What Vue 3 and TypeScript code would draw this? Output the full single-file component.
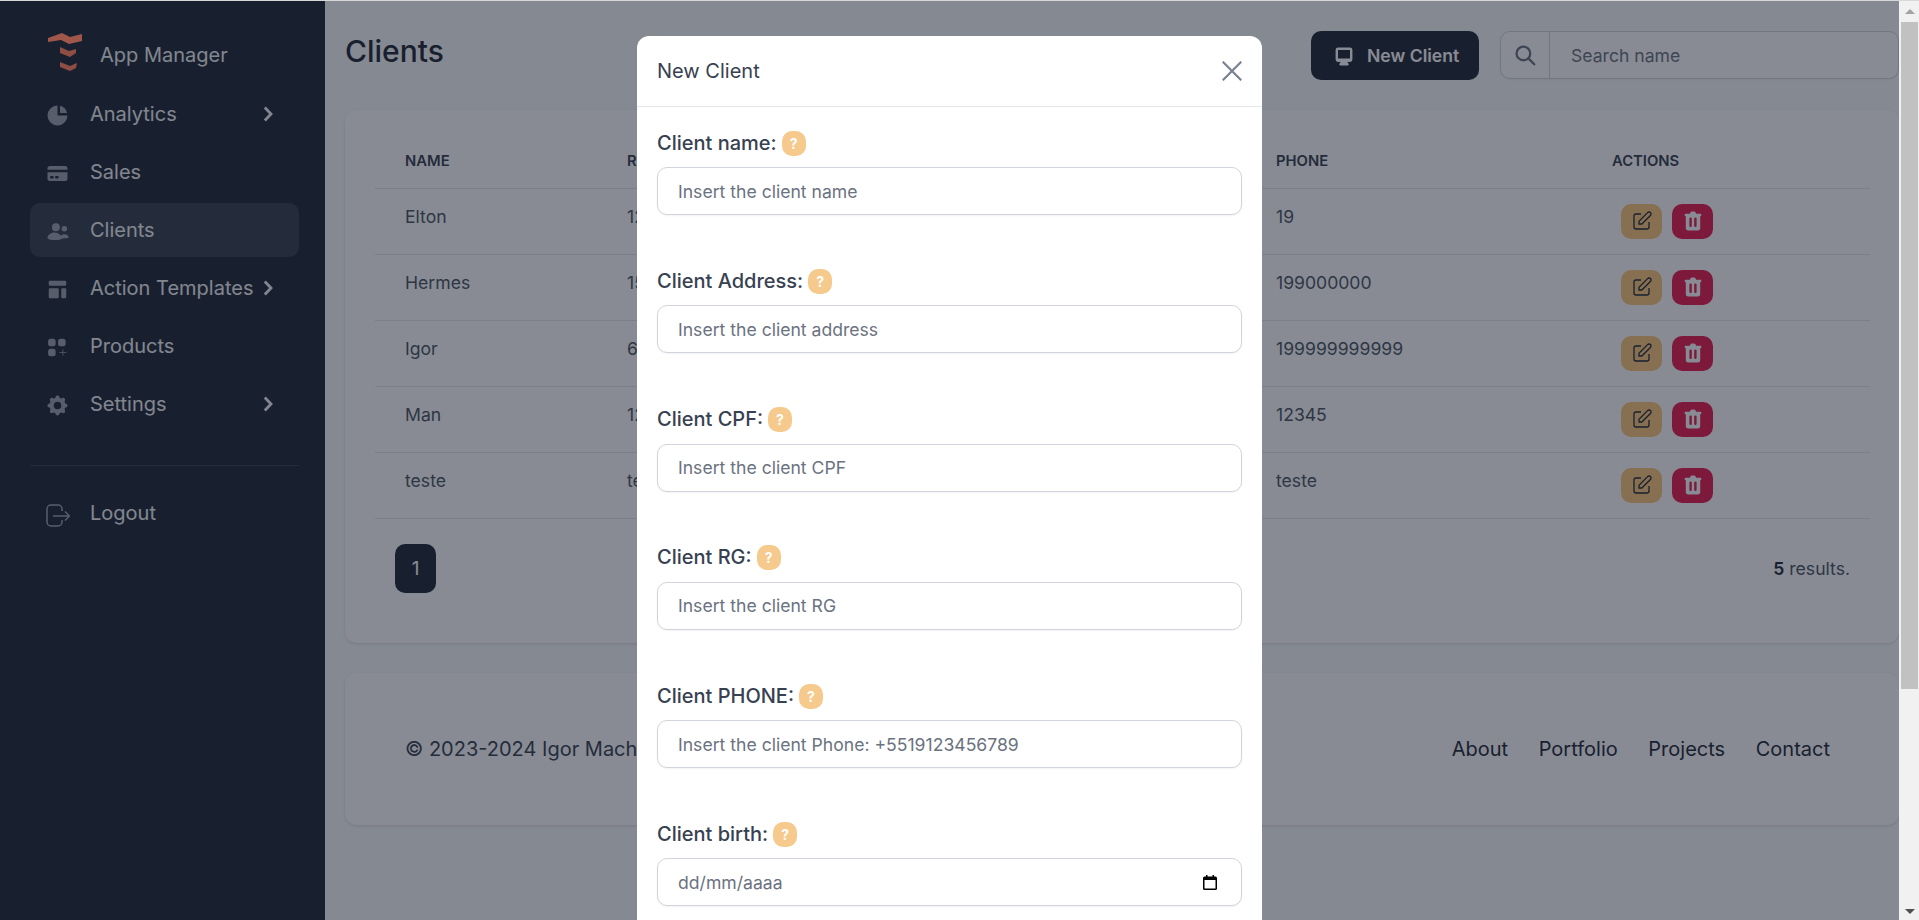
<template>
  <div class="app">
    <div class="page">
      <aside class="sidebar">
        <div class="brand">
          <svg class="logo" viewBox="0 0 36 40" width="36" height="40">
            <path d="M1 6 15 1l8 4 12-3v7l-13 3-8-4L1 10z" fill="#a0574a" />
            <path d="M13 15l9 4 7-2v4l-6 4-10-4z" fill="#8f4e43" />
            <path d="M13 30l10 4 7-3-1 5-6 3-10-4z" fill="#8f4e43" />
          </svg>
          <span>App Manager</span>
        </div>
        <nav class="menu">
          <a v-for="item in menu" :key="item.label" class="menu-item" :class="{ active: item.label === 'Clients' }">
            <svg class="menu-icon" viewBox="0 0 20 20" fill="currentColor">
              <path v-for="d in item.paths" :key="d" :d="d" fill-rule="evenodd" clip-rule="evenodd" />
              <path v-if="item.label === 'Products'" d="M11.5 14h5.5M14.25 11.5v5" stroke="currentColor" stroke-width=".6" />
            </svg>
            <span class="menu-label">{{ item.label }}</span>
            <svg v-if="item.arrow" class="chevron" viewBox="0 0 10 16" fill="none">
              <path d="M1.8 1.5 8 8l-6.2 6.5" stroke="currentColor" stroke-width="2.8" />
            </svg>
          </a>
        </nav>
        <div class="menu-sep"></div>
        <a class="menu-item">
          <svg class="menu-icon" viewBox="0 0 25 25" fill="none" stroke="currentColor" stroke-width="1.5">
            <path d="M17 9V7a4 4 0 0 0-4-4H6A4 4 0 0 0 2 7v13a4 4 0 0 0 4 4h7a4 4 0 0 0 4-4v-2" />
            <path d="M8 14h16M20 9.500 24.500 14 20 18.500" />
          </svg>
          <span class="menu-label">Logout</span>
        </a>
      </aside>

      <main class="content">
        <header class="topbar">
          <h1>Clients</h1>
          <div class="tools">
            <button class="new-btn">
              <svg viewBox="0 0 20 20" width="24" height="24" fill="currentColor">
                <path fill-rule="evenodd" clip-rule="evenodd" d="M3 5a2 2 0 012-2h10a2 2 0 012 2v8a2 2 0 01-2 2h-2.220l.123.489.804.804A1 1 0 0113 18H7a1 1 0 01-.707-1.707l.804-.804L7.220 15H5a2 2 0 01-2-2V5zm5.771 7H5V5h10v7H8.771z" />
              </svg>
              New Client
            </button>
            <div class="search">
              <span class="search-addon">
                <svg viewBox="0 0 20 20" width="21" height="21" fill="none" stroke="currentColor" stroke-width="2.200">
                  <circle cx="8" cy="8" r="6.500" />
                  <path d="M13 13l6 6" />
                </svg>
              </span>
              <input type="text" placeholder="Search name" />
            </div>
          </div>
        </header>

        <section class="card table-card">
          <table>
            <thead>
              <tr>
                <th v-for="col in columns" :key="col">{{ col }}</th>
              </tr>
            </thead>
            <tbody>
              <tr v-for="c in clients" :key="c.name">
                <td>{{ c.name }}</td>
                <td>{{ c.rg }}</td>
                <td>{{ c.cpf }}</td>
                <td>{{ c.address }}</td>
                <td>{{ c.phone }}</td>
                <td class="actions">
                  <button class="act edit">
                    <svg viewBox="0 0 24 24" width="24" height="24" fill="none" stroke="currentColor" stroke-width="1.300">
                      <path d="M11 5H6a2 2 0 00-2 2v11a2 2 0 002 2h11a2 2 0 002-2v-5m-1.414-9.414a2 2 0 112.828 2.828L11.828 15H9v-2.828l8.586-8.586z" />
                    </svg>
                  </button>
                  <button class="act del">
                    <svg viewBox="0 0 20 20" width="24" height="24" fill="currentColor">
                      <path fill-rule="evenodd" clip-rule="evenodd" d="M9 2a1 1 0 00-.894.553L7.382 4H4a1 1 0 000 2v10a2 2 0 002 2h8a2 2 0 002-2V6a1 1 0 100-2h-3.382l-.724-1.447A1 1 0 0011 2H9zM7 8a1 1 0 012 0v6a1 1 0 11-2 0V8zm5-1a1 1 0 00-1 1v6a1 1 0 102 0V8a1 1 0 00-1-1z" />
                    </svg>
                  </button>
                </td>
              </tr>
            </tbody>
          </table>
          <div class="pager">
            <button class="page-btn">1</button>
            <span class="results"><b>5</b> results.</span>
          </div>
        </section>

        <footer class="card footer">
          <span>© 2023-2024 Igor Machado. All Rights Reserved.</span>
          <div class="links">
            <a v-for="l in links" :key="l">{{ l }}</a>
          </div>
        </footer>
      </main>

      <div class="overlay">
        <div class="modal">
          <div class="modal-head">
            <h2>New Client</h2>
            <svg viewBox="0 0 20 20" width="20" height="20" fill="none" stroke="currentColor" stroke-width="2.200">
              <path d="M.7.7l18.600 18.600M19.300.7.7 19.300" />
            </svg>
          </div>
          <div class="modal-body">
            <div v-for="f in fields" :key="f.label" class="field">
              <label>{{ f.label }}<span class="hint">?</span></label>
              <div class="input-wrap">
                <input type="text" :placeholder="f.placeholder" />
                <svg v-if="f.date" class="calendar" viewBox="0 0 14 15" width="14" height="15">
                  <path d="M3 0h1.500v1.500h5V0H11v1.500h1.500A1.500 1.500 0 0 1 14 3v10.500a1.500 1.500 0 0 1-1.500 1.500h-11A1.500 1.500 0 0 1 0 13.500V3a1.500 1.500 0 0 1 1.500-1.500H3zM1.500 5v8.500h11V5z" fill-rule="evenodd" />
                </svg>
              </div>
            </div>
          </div>
        </div>
      </div>
    </div>

    <div class="scrollbar">
      <span class="arrow up"></span>
      <div class="thumb"></div>
      <span class="arrow down"></span>
    </div>
  </div>
</template>

<script setup lang="ts">
interface MenuItem {
  label: string
  paths: string[]
  arrow?: boolean
}

const menu: MenuItem[] = [
  {
    label: 'Analytics',
    arrow: true,
    paths: ['M2 10a8 8 0 018-8v8h8a8 8 0 11-16 0z', 'M12 2.252A8.014 8.014 0 0117.748 8H12V2.252z']
  },
  {
    label: 'Sales',
    paths: [
      'M4 4a2 2 0 00-2 2v1h16V6a2 2 0 00-2-2H4z',
      'M18 9H2v5a2 2 0 002 2h12a2 2 0 002-2V9zM4 13a1 1 0 011-1h1a1 1 0 110 2H5a1 1 0 01-1-1zm5-1a1 1 0 100 2h1a1 1 0 100-2H9z'
    ]
  },
  {
    label: 'Clients',
    paths: [
      'M5.500 6.500a3.200 3.200 0 1 1 6.400 0 3.200 3.200 0 0 1-6.400 0zM13.300 7.800a2.200 2.200 0 1 1 4.400 0 2.200 2.200 0 0 1-4.400 0z',
      'M2 15.500c0-2.800 2.700-4.700 5.500-4.700 2.200 0 4 .9 5 2.500.9-.8 2-1.200 3.200-1.200 1.500 0 3 .8 3.300 2.700-.9.500-2.800.7-5.300.7-.9.900-3 1.300-5.500 1.300-3.500 0-5.700-.6-5.700-1.300z'
    ]
  },
  {
    label: 'Action Templates',
    arrow: true,
    paths: [
      'M3 4a1 1 0 011-1h12a1 1 0 011 1v2a1 1 0 01-1 1H4a1 1 0 01-1-1V4zM3 10a1 1 0 011-1h6a1 1 0 011 1v6a1 1 0 01-1 1H4a1 1 0 01-1-1v-6zM14 9a1 1 0 00-1 1v6a1 1 0 001 1h2a1 1 0 001-1v-6a1 1 0 00-1-1h-2z'
    ]
  },
  {
    label: 'Products',
    paths: [
      'M4.500 3a2 2 0 00-2 2v2a2 2 0 002 2h2a2 2 0 002-2V5a2 2 0 00-2-2h-2zM4.500 11a2 2 0 00-2 2v2a2 2 0 002 2h2a2 2 0 002-2v-2a2 2 0 00-2-2h-2zM10.500 5a2 2 0 012-2h2a2 2 0 012 2v2a2 2 0 01-2 2h-2a2 2 0 01-2-2V5z'
    ]
  },
  {
    label: 'Settings',
    arrow: true,
    paths: [
      'M11.490 3.170c-.38-1.560-2.600-1.560-2.980 0a1.532 1.532 0 01-2.286.948c-1.372-.836-2.942.734-2.106 2.106.54.886.061 2.042-.947 2.287-1.561.379-1.561 2.600 0 2.978a1.532 1.532 0 01.947 2.287c-.836 1.372.734 2.942 2.106 2.106a1.532 1.532 0 012.287.947c.379 1.561 2.600 1.561 2.978 0a1.533 1.533 0 012.287-.947c1.372.836 2.942-.734 2.106-2.106a1.533 1.533 0 01.947-2.287c1.561-.379 1.561-2.600 0-2.978a1.532 1.532 0 01-.947-2.287c.836-1.372-.734-2.942-2.106-2.106a1.532 1.532 0 01-2.287-.947zM10 13a3 3 0 100-6 3 3 0 000 6z'
    ]
  }
]

const columns = ['Name', 'RG', 'CPF', 'Address', 'Phone', 'Actions']

const clients = [
  { name: 'Elton', rg: '123456789', cpf: '12345678900', address: 'Rua A', phone: '19' },
  { name: 'Hermes', rg: '159753', cpf: '15975300000', address: 'Rua B', phone: '199000000' },
  { name: 'Igor', rg: '654321', cpf: '65432100000', address: 'Rua C', phone: '199999999999' },
  { name: 'Man', rg: '123456', cpf: '12345600000', address: 'Rua D', phone: '12345' },
  { name: 'teste', rg: 'teste', cpf: 'teste', address: 'teste', phone: 'teste' }
]

const links = ['About', 'Portfolio', 'Projects', 'Contact']

const fields = [
  { label: 'Client name:', placeholder: 'Insert the client name' },
  { label: 'Client Address:', placeholder: 'Insert the client address' },
  { label: 'Client CPF:', placeholder: 'Insert the client CPF' },
  { label: 'Client RG:', placeholder: 'Insert the client RG' },
  { label: 'Client PHONE:', placeholder: 'Insert the client Phone: +5519123456789' },
  { label: 'Client birth:', placeholder: 'dd/mm/aaaa', date: true }
]
</script>

<style>
html,
body {
  margin: 0;
  overflow: hidden;
}
</style>

<style scoped>
.app {
  display: flex;
  height: 919px;
  border-top: 1px solid #d8d8d8;
  overflow: hidden;
  font-family: Inter, "Noto Sans", sans-serif;
  background: #f1f1f1;
}

.page {
  position: relative;
  display: flex;
  flex: 1;
  min-width: 0;
  background: #f9fafb;
  overflow: hidden;
}

.sidebar {
  box-sizing: border-box;
  flex: 0 0 325px;
  padding: 31px 26px 0 30px;
  background: #1f2937;
  color: #f3f4f6;
}

.brand {
  display: flex;
  align-items: center;
  height: 40px;
  padding-left: 17px;
  font-size: 20px;
  gap: 17px;
}

.brand span {
  margin-top: 6px;
}

.logo {
  position: relative;
  z-index: 1;
}

.menu {
  display: flex;
  flex-direction: column;
  gap: 4px;
  margin-top: 15px;
}

.menu-item {
  display: flex;
  align-items: center;
  height: 54px;
  padding: 0 26px 0 15px;
  border-radius: 10px;
  font-size: 20px;
}

.menu-item.active {
  background: #374151;
}

.menu-icon {
  flex: none;
  width: 25px;
  height: 25px;
  margin: 3px 20px 0 0;
  color: #9ca3af;
}

.menu-label {
  flex: 1;
}

.chevron {
  width: 10px;
  height: 16px;
  color: #f3f4f6;
}

.menu-sep {
  height: 1px;
  margin: 34px 0 20px;
  background: #374151;
}

.content {
  flex: 1;
  min-width: 0;
  padding: 30px 0 0 20px;
}

.topbar {
  display: flex;
  align-items: flex-start;
  justify-content: space-between;
  height: 49px;
}

h1 {
  margin: 0;
  font-size: 30px;
  font-weight: 500;
  color: #1f2937;
  line-height: 40px;
}

.tools {
  display: flex;
  gap: 21px;
}

.new-btn {
  display: flex;
  align-items: center;
  gap: 11px;
  width: 168px;
  height: 49px;
  padding: 0 0 0 21px;
  border: 0;
  border-radius: 10px;
  background: #1f2937;
  color: #fff;
  font: 600 17.6px Inter, sans-serif;
}

.search {
  display: flex;
  box-sizing: border-box;
  width: 399px;
  height: 48px;
  border: 1px solid #d1d5db;
  border-radius: 10px;
  background: #fff;
  box-shadow: 0 1px 2px rgba(0, 0, 0, 0.05);
}

.search-addon {
  display: flex;
  align-items: center;
  justify-content: center;
  width: 48px;
  border-right: 1px solid #d1d5db;
  color: #6b7280;
}

.search input {
  flex: 1;
  min-width: 0;
  padding: 0 21px;
  border: 0;
  outline: 0;
  background: transparent;
  font: 17.6px Inter, sans-serif;
}

input::placeholder {
  color: #6b7280;
  opacity: 1;
}

.card {
  box-sizing: border-box;
  border-radius: 12px;
  background: #fff;
  box-shadow: 0 1px 3px rgba(0, 0, 0, 0.12);
}

.table-card {
  height: 533px;
  margin-top: 30px;
  padding: 20px 29px 0 30px;
}

table {
  width: 1495px;
  border-collapse: collapse;
  table-layout: fixed;
  font-size: 17.6px;
  color: #4b5563;
}

th {
  height: 58px;
  padding: 4px 30px 0;
  border-bottom: 1px solid #e5e7eb;
  box-sizing: border-box;
  text-align: left;
  text-transform: uppercase;
  font-size: 14.8px;
  font-weight: 600;
  color: #374151;
}

th:nth-child(1),
th:nth-child(2) {
  width: 222px;
}

th:nth-child(3) {
  width: 220px;
}

th:nth-child(4) {
  width: 207px;
}

th:nth-child(5) {
  width: 336px;
}

td {
  height: 66px;
  box-sizing: border-box;
  padding: 0 30px 10px;
  border-bottom: 1px solid #e5e7eb;
  white-space: nowrap;
}

td.actions {
  padding: 0 0 0 39px;
}

.act {
  display: inline-flex;
  align-items: center;
  justify-content: center;
  width: 41px;
  height: 35px;
  padding: 0;
  border: 0;
  border-radius: 10px;
  vertical-align: middle;
}

.act + .act {
  margin-left: 10px;
}

.edit {
  background: #fbc97a;
  color: #1f2937;
}

.del {
  background: #e81b4c;
  color: #fff;
}

.pager {
  display: flex;
  align-items: center;
  justify-content: space-between;
  padding: 25px 20px 0;
}

.page-btn {
  width: 41px;
  height: 49px;
  border: 0;
  border-radius: 10px;
  background: #1f2937;
  color: #fff;
  font: 19px Inter, sans-serif;
}

.results {
  font-size: 17.6px;
  color: #4b5563;
}

.results b {
  font-weight: 600;
  color: #1f2937;
}

.footer {
  display: flex;
  align-items: center;
  justify-content: space-between;
  height: 152px;
  margin-top: 30px;
  padding: 0 69px 0 60px;
  font-size: 20px;
  color: #374151;
}

.links {
  display: flex;
  gap: 30.6px;
}

.links a {
  color: #1f2937;
}

.overlay {
  position: absolute;
  inset: 0;
  display: flex;
  justify-content: center;
  align-items: flex-start;
  padding-top: 35px;
  background: rgba(17, 24, 39, 0.5);
}

.modal {
  flex: 0 0 625px;
  border-radius: 12px;
  background: #fff;
}

.modal-head {
  display: flex;
  align-items: center;
  justify-content: space-between;
  box-sizing: border-box;
  height: 71px;
  padding: 0 20px;
  border-bottom: 1px solid #e5e7eb;
  color: #7b8290;
}

h2 {
  margin: 0;
  font-size: 20px;
  font-weight: 400;
  color: #374151;
}

.modal-body {
  padding: 23px 20px 0;
}

.field {
  margin-bottom: 53.3px;
}

label {
  display: flex;
  align-items: center;
  gap: 5px;
  height: 25px;
  margin-bottom: 12px;
  font-size: 20px;
  font-weight: 500;
  color: #374151;
}

.hint {
  display: inline-flex;
  align-items: center;
  justify-content: center;
  width: 24px;
  height: 25px;
  margin-top: 1px;
  border-radius: 10px;
  background: #f6c98d;
  color: #fff;
  font-size: 14px;
  font-weight: 700;
}

.input-wrap {
  position: relative;
}

.input-wrap input {
  display: block;
  box-sizing: border-box;
  width: 100%;
  height: 48px;
  padding: 0 20px;
  border: 1px solid #d1d5db;
  border-radius: 10px;
  outline: 0;
  box-shadow: 0 1px 2px rgba(0, 0, 0, 0.05);
  font: 17.6px Inter, sans-serif;
}

.calendar {
  position: absolute;
  top: 17px;
  right: 25px;
}

.scrollbar {
  display: flex;
  flex-direction: column;
  flex: 0 0 20px;
  align-items: flex-end;
}

.thumb {
  flex: 0 0 667px;
  width: 17px;
  margin-right: 1px;
  background: #c1c1c1;
}

.arrow {
  align-self: center;
  width: 0;
  height: 0;
  border-left: 5px solid transparent;
  border-right: 5px solid transparent;
  margin-left: 2px;
}

.arrow.up {
  margin-top: 8px;
  margin-bottom: 8px;
  border-bottom: 5px solid #a3a3a3;
}

.arrow.down {
  margin-top: 220px;
  border-top: 5px solid #505050;
}
</style>
